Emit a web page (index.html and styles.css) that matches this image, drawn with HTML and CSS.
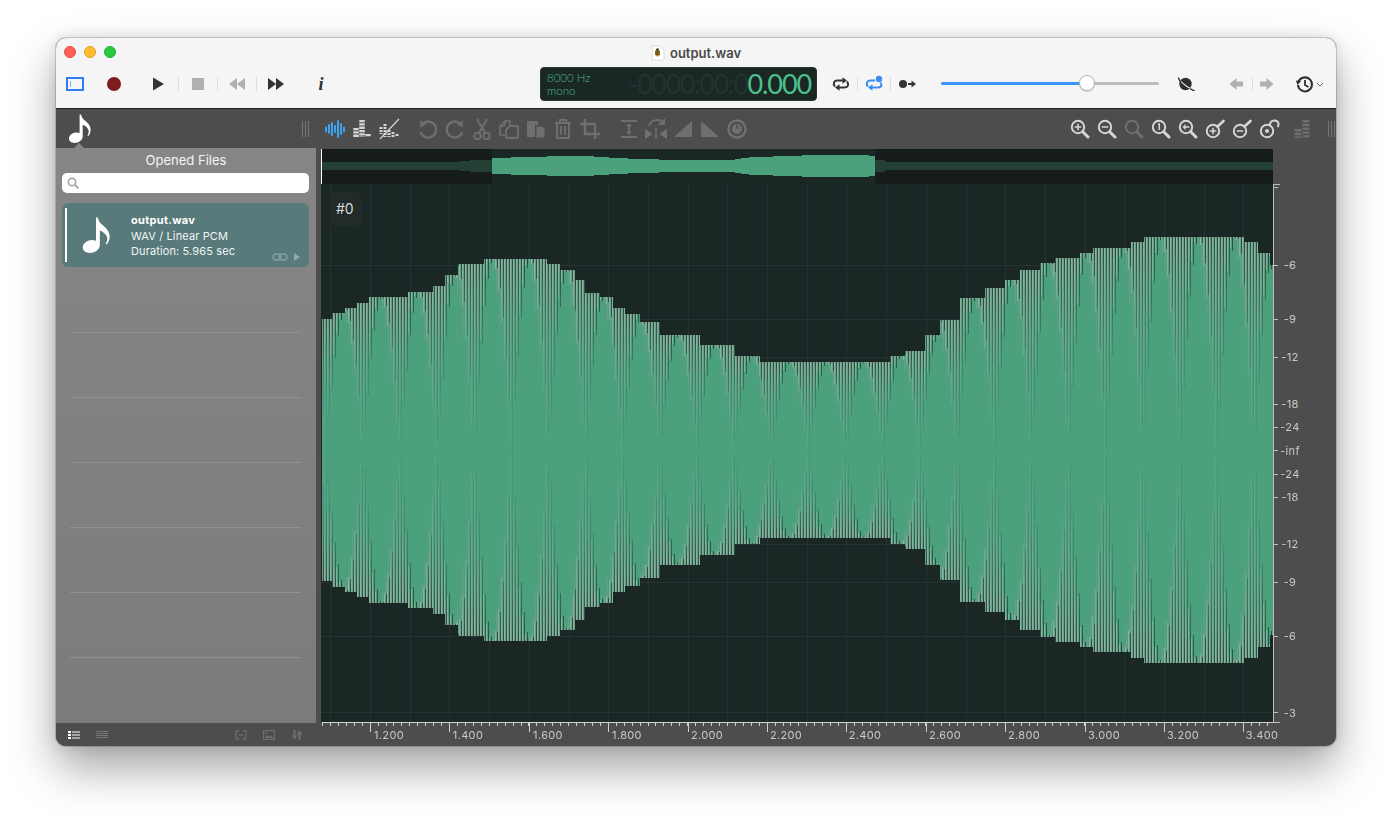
FILE: index.html
```html
<!DOCTYPE html>
<html lang="en">
<head>
<meta charset="utf-8">
<title>output.wav</title>
<link rel="stylesheet" href="styles.css">
</head>
<body>
<svg class="defs" width="0" height="0" aria-hidden="true">
  <symbol id="note" viewBox="0 0 24 29">
    <path fill="currentColor" d="M11.6 0.4h1.5c.5 3.2 2 4.6 4.500 6.700 3 2.600 5 5.200 5 8.700 0 2.400-.8 4.500-2.300 6.300l-.9-.4c.9-1.600 1.300-3.100 1.300-4.500 0-2.700-3.300-5.300-6-6.400v11.700c0 3.500-3.700 6.400-8 6.400-3.500 0-5.700-1.700-5.700-4.300 0-3.400 3.700-6 7.600-6 1 0 2 .2 3 .5z"/>
  </symbol>
</svg>

<div class="window">
  <header class="chrome">
    <div class="titlebar">
      <div class="lights"><i class="light red"></i><i class="light amber"></i><i class="light green"></i></div>
      <div class="title">
        <svg class="doc" viewBox="0 0 14 16"><path d="M1 1h8l4 4v10H1z" fill="#fff" stroke="#d6d6d6" stroke-width=".8"/><ellipse cx="6.500" cy="8" rx="2.600" ry="3.400" fill="#c58a2b"/><path d="M4.200 7h4.600M4.200 9h4.600" stroke="#2f2a22" stroke-width="1"/><circle cx="6.500" cy="4.600" r="1.300" fill="#333"/></svg>
        <span>output.wav</span>
      </div>
    </div>
    <div class="transport">
      <svg class="sidebtn" viewBox="0 0 18 14"><rect x="1" y="1" width="16" height="12" fill="none" stroke="#2f7cf6" stroke-width="2"/><path d="M4.500 4v6" stroke="#7fb0fa" stroke-width="1"/></svg>
      <svg class="ic ml20" viewBox="0 0 20 20"><circle cx="10" cy="10" r="7" fill="#7e1b1b"/></svg>
      <svg class="ic ml24" viewBox="0 0 20 20"><path d="M5 3.500l11 6.500-11 6.500z" fill="#333"/></svg>
      <i class="sep ml10"></i>
      <svg class="ic ml9" viewBox="0 0 20 20"><rect x="4" y="4" width="12" height="12" fill="#b0b0b0"/></svg>
      <i class="sep ml9"></i>
      <svg class="ic ml9" viewBox="0 0 20 20"><path d="M10 4v12L2 10zM18 4v12l-8-6z" fill="#b0b0b0"/></svg>
      <i class="sep ml9"></i>
      <svg class="ic ml9" viewBox="0 0 20 20"><path d="M2 4l8 6-8 6zM10 4l8 6-8 6z" fill="#333"/></svg>
      <span class="info">i</span>

      <div class="lcd">
        <div class="lcd-meta"><span>8000 Hz</span><span>mono</span></div>
        <div class="lcd-time"><span class="lcd-dim">-0000:00:0</span><span class="lcd-live">0.000</span></div>
      </div>

      <svg class="ic ml14" viewBox="0 0 20 20"><path d="M4 12.500C1.500 9.500 3 6.500 6.500 6.500H13M16 7.500c2.500 3 1 6-2.500 6H7" fill="none" stroke="#333" stroke-width="2"/><path d="M11.500 3.200L16 6.500l-4.500 3.300zM8.500 10.200L4 13.500l4.500 3.300z" fill="#333"/></svg>
      <i class="sep ml6"></i>
      <svg class="ic ml6" viewBox="0 0 20 20"><path d="M4 12.500C1.500 9.500 3 6.500 6.500 6.500H11M16.500 8.500c2 3 .5 5-3 5H7" fill="none" stroke="#3b8cf5" stroke-width="2"/><path d="M8.500 10.200L4 13.500l4.500 3.300z" fill="#3b8cf5"/><circle cx="15" cy="5" r="3.200" fill="#3b8cf5"/></svg>
      <i class="sep ml6"></i>
      <svg class="ic ml6" viewBox="0 0 20 20"><circle cx="6" cy="10" r="4" fill="#333"/><path d="M11 10h5" stroke="#333" stroke-width="2"/><path d="M14.500 6.500L19 10l-4.500 3.500z" fill="#333"/></svg>

      <div class="slider"><div class="slider-fill"></div><div class="slider-knob"></div></div>

      <svg class="ic ml17" viewBox="0 0 20 20"><circle cx="9.500" cy="10" r="6.200" fill="#2e2e2e"/><path d="M2.500 4.500c3 4 9 9 15 11.500" fill="none" stroke="#f5f5f5" stroke-width="1.200"/><path d="M3 3.500c-1 1 .6 3 2 4.500M14 14.500c2 1.500 4 2.500 4.500 1.500" fill="none" stroke="#2e2e2e" stroke-width="1.400"/></svg>
      <svg class="ic ml30" viewBox="0 0 20 20"><path d="M3.500 10l7-6v3.500H17v5h-6.500V16z" fill="#b0b0b0"/></svg>
      <i class="sep ml6"></i>
      <svg class="ic ml4" viewBox="0 0 20 20"><path d="M16.500 10l-7-6v3.500H3v5h6.500V16z" fill="#b0b0b0"/></svg>
      <svg class="ic ml18" viewBox="0 0 20 20"><path d="M3.600 7.500A7 7 0 1 1 3 11" fill="none" stroke="#2e2e2e" stroke-width="2"/><path d="M1 6.500l5 .8-3.600 3.600z" fill="#2e2e2e"/><path d="M10 6v5l3.500 2" fill="none" stroke="#2e2e2e" stroke-width="1.800"/></svg>
      <svg class="chev" viewBox="0 0 8 5"><path d="M1 1l3 3 3-3" fill="none" stroke="#666" stroke-width="1"/></svg>
    </div>
  </header>

  <nav class="tools">
    <svg class="note-tab"><use href="#note"/></svg>
    <svg class="grip ml210" viewBox="0 0 8 16"><path d="M.5 0v16M3.500 0v16M6.500 0v16" stroke="#777" stroke-width="1"/></svg>

    <div class="tool-group ml13">
      <svg class="t" viewBox="0 0 24 24"><path d="M3 10.500v4M6 8v8M9 6v12M12 9v6M15 4v16M18 7v10M21 10.500v4" stroke="#3ea3ee" stroke-width="2" stroke-linecap="round"/></svg>
      <svg class="t on" viewBox="0 0 24 24"><path d="M6 11v9M12 3v17M18 17v3" stroke="currentColor" stroke-width="5.500" stroke-dasharray="2.300 1"/></svg>
      <svg class="t on" viewBox="0 0 24 24"><path d="M4 10v7M8 7v13M12 13v7M16 15v5M20 17v3" stroke="currentColor" stroke-width="3" stroke-dasharray="2 1"/><path d="M3 22L22 2" stroke="currentColor" stroke-width="1.200"/></svg>
    </div>

    <div class="tool-group ml15">
      <svg class="t off" viewBox="0 0 24 24"><path d="M7 6.500A8 8 0 1 1 4.600 15" fill="none" stroke="currentColor" stroke-width="2.400"/><path d="M4 3.500l.4 7 6.200-3.200z" fill="currentColor"/></svg>
      <svg class="t off" viewBox="0 0 24 24"><path d="M17 6.500A8 8 0 1 0 19.400 15" fill="none" stroke="currentColor" stroke-width="2.400"/><path d="M20 3.500l-.4 7-6.200-3.200z" fill="currentColor"/></svg>
      <svg class="t off" viewBox="0 0 24 24"><path d="M7 2l8 14M17 2L9 16" stroke="currentColor" stroke-width="2"/><circle cx="7.500" cy="19" r="3.200" fill="none" stroke="currentColor" stroke-width="1.800"/><circle cx="16.500" cy="19" r="3.200" fill="none" stroke="currentColor" stroke-width="1.800"/></svg>
      <svg class="t off" viewBox="0 0 24 24"><path d="M3 9l5-5h5v5M3 9v9h5M3 9h4l2-5" fill="none" stroke="currentColor" stroke-width="1.700"/><path d="M9 13l4-4h7a1 1 0 0 1 1 1v10a1 1 0 0 1-1 1H10a1 1 0 0 1-1-1z" fill="none" stroke="currentColor" stroke-width="1.800"/></svg>
      <svg class="t off" viewBox="0 0 24 24"><path d="M3 4h11v4h-3v12H3z" fill="currentColor"/><path d="M12 9h6l3 3v9h-9z" fill="currentColor" stroke="#4d4d4d" stroke-width="1"/></svg>
      <svg class="t off" viewBox="0 0 24 24"><path d="M4 6h16M9 6V3h6v3M6 6v15h12V6M10 9v9M14 9v9" fill="none" stroke="currentColor" stroke-width="1.900"/></svg>
      <svg class="t off" viewBox="0 0 24 24"><path d="M7 2v15h15M2 7h15v15" fill="none" stroke="currentColor" stroke-width="2.400"/></svg>
    </div>

    <div class="tool-group ml15">
      <svg class="t off" viewBox="0 0 24 24"><path d="M4 4h16M4 20h16M12 7v10" stroke="currentColor" stroke-width="1.800"/><path d="M9 9.500L12 6l3 3.500zM9 14.500l3 3.500 3-3.500z" fill="currentColor"/></svg>
      <svg class="t off" viewBox="0 0 24 24"><path d="M1 12l8 5-8 5zM23 12l-8 5 8 5z" fill="currentColor"/><path d="M12 11v11" stroke="currentColor" stroke-width="1.600"/><path d="M5 9c1-5 8-8 14-4" fill="none" stroke="currentColor" stroke-width="2"/><path d="M21 1v7h-7z" fill="currentColor"/></svg>
      <svg class="t off" viewBox="0 0 24 24"><path d="M3 20L21 4v16z" fill="currentColor"/></svg>
      <svg class="t off" viewBox="0 0 24 24"><path d="M3 4l18 16H3z" fill="currentColor"/></svg>
      <svg class="t off" viewBox="0 0 24 24"><circle cx="12" cy="12" r="8.500" fill="none" stroke="currentColor" stroke-width="2.500"/><circle cx="12" cy="12" r="5" fill="currentColor"/><path d="M12 8v3.500" stroke="#4d4d4d" stroke-width="1.500"/></svg>
    </div>

    <div class="tool-group ml-auto">
      <svg class="t on" viewBox="0 0 24 24"><circle cx="10" cy="10" r="6.200" fill="none" stroke="currentColor" stroke-width="2"/><path d="M14.700 14.700l5.300 5.300" stroke="currentColor" stroke-width="3" stroke-linecap="round"/><path d="M6.700 10h6.600M10 6.700v6.600" stroke="currentColor" stroke-width="1.600"/></svg>
      <svg class="t on" viewBox="0 0 24 24"><circle cx="10" cy="10" r="6.200" fill="none" stroke="currentColor" stroke-width="2"/><path d="M14.700 14.700l5.300 5.300" stroke="currentColor" stroke-width="3" stroke-linecap="round"/><path d="M6.700 10h6.600" stroke="currentColor" stroke-width="1.600"/></svg>
      <svg class="t off" viewBox="0 0 24 24"><circle cx="10" cy="10" r="6.200" fill="none" stroke="currentColor" stroke-width="2"/><path d="M14.700 14.700l5.300 5.300" stroke="currentColor" stroke-width="3" stroke-linecap="round"/></svg>
      <svg class="t on" viewBox="0 0 24 24"><circle cx="10" cy="10" r="6.200" fill="none" stroke="currentColor" stroke-width="2"/><path d="M14.700 14.700l5.300 5.300" stroke="currentColor" stroke-width="3" stroke-linecap="round"/><path d="M9 7h1.300v6" fill="none" stroke="currentColor" stroke-width="1.500"/></svg>
      <svg class="t on" viewBox="0 0 24 24"><circle cx="10" cy="10" r="6.200" fill="none" stroke="currentColor" stroke-width="2"/><path d="M14.700 14.700l5.300 5.300" stroke="currentColor" stroke-width="3" stroke-linecap="round"/><path d="M8 10h5.500" stroke="currentColor" stroke-width="1.500"/><path d="M9.500 7L6.500 10l3 3z" fill="currentColor"/></svg>
      <svg class="t on" viewBox="0 0 24 24"><circle cx="10" cy="14" r="6.200" fill="none" stroke="currentColor" stroke-width="2"/><path d="M14.500 9.500L20.500 4" stroke="currentColor" stroke-width="2.600" stroke-linecap="round"/><path d="M6.700 14h6.600M10 10.700v6.600" stroke="currentColor" stroke-width="1.600"/></svg>
      <svg class="t on" viewBox="0 0 24 24"><circle cx="10" cy="14" r="6.200" fill="none" stroke="currentColor" stroke-width="2"/><path d="M14.500 9.500L20.500 4" stroke="currentColor" stroke-width="2.600" stroke-linecap="round"/><path d="M6.700 14h6.600" stroke="currentColor" stroke-width="1.600"/></svg>
      <svg class="t on" viewBox="0 0 24 24"><circle cx="10" cy="14" r="6.200" fill="none" stroke="currentColor" stroke-width="2"/><circle cx="10" cy="14" r="2" fill="currentColor"/><path d="M13 8c0-5.500 8-6 8.500-1.500.2 1.500-.3 2.700-1 3.500" fill="none" stroke="currentColor" stroke-width="2"/></svg>
    </div>
    <svg class="t off ml9" viewBox="0 0 24 24"><path d="M8 12v9M16 3v18" stroke="currentColor" stroke-width="7" stroke-dasharray="2.400 1.400"/></svg>
    <svg class="grip ml14" viewBox="0 0 8 16"><path d="M.5 0v16M3.500 0v16M6.500 0v16" stroke="#777" stroke-width="1"/></svg>
  </nav>

  <div class="workspace">
    <aside class="sidebar">
      <h1 class="side-title">Opened Files</h1>
      <div class="search">
        <svg class="search-ic" viewBox="0 0 12 12"><circle cx="5" cy="5" r="3.700" fill="none" stroke="#a8a8a8" stroke-width="1.700"/><path d="M8 8l3.300 3.300" stroke="#a8a8a8" stroke-width="2"/></svg>
      </div>
      <article class="file">
        <i class="file-mark"></i>
        <svg class="file-note"><use href="#note"/></svg>
        <div class="file-text">
          <strong>output.wav</strong>
          <span>WAV / Linear PCM</span>
          <span>Duration: 5.965 sec</span>
        </div>
        <div class="file-actions">
          <svg class="file-link" viewBox="0 0 16 10"><rect x="1" y="2" width="8" height="6" rx="3" fill="none" stroke="#7f9f9f" stroke-width="1.400"/><rect x="7" y="2" width="8" height="6" rx="3" fill="none" stroke="#7f9f9f" stroke-width="1.400"/></svg>
          <svg class="file-play" viewBox="0 0 8 10"><path d="M1 1l6 4-6 4z" fill="#8fabab"/></svg>
        </div>
      </article>
      <ul class="rows"><li></li><li></li><li></li><li></li><li></li><li></li></ul>
      <footer class="side-foot">
        <svg class="f" viewBox="0 0 12 8"><path d="M0 0h3v2H0zM0 3h3v2H0zM0 6h3v2H0zM4 .5h8v1H4zM4 3.500h8v1H4zM4 6.500h8v1H4z" fill="#fff"/></svg>
        <svg class="f ml16" viewBox="0 0 12 8"><path d="M0 .5h12M0 2.500h12M0 4.500h12M0 6.500h12" stroke="#757575" stroke-width="1"/></svg>
        <svg class="f2 ml-auto" viewBox="0 0 12 10"><path d="M4 1H2a1 1 0 0 0-1 1v6a1 1 0 0 0 1 1h2M8 1h2a1 1 0 0 1 1 1v6a1 1 0 0 1-1 1H8M4 5h4" fill="none" stroke="#6e6e6e" stroke-width="1.300"/></svg>
        <svg class="f2 ml16" viewBox="0 0 12 10"><rect x=".6" y=".6" width="10.800" height="8.800" fill="none" stroke="#6e6e6e" stroke-width="1.200"/><path d="M1.500 8l3-3 2 2 1.500-1.500L10.500 8z" fill="#6e6e6e"/><circle cx="3.500" cy="3.200" r="1" fill="#6e6e6e"/></svg>
        <svg class="f2 ml16" viewBox="0 0 12 10"><path d="M3.500 0v7M8.500 3v7" stroke="#6e6e6e" stroke-width="2"/><path d="M.5 5.500h6L3.500 9.500zM5.500 4.500h6L8.500.5z" fill="#6e6e6e"/></svg>
      </footer>
    </aside>

    <main class="editor">
      <div class="scope">
        <canvas id="wave" width="960" height="584"></canvas>
        <div class="channel">#0</div>
        <span class="db" style="top:116px">-6</span>
        <span class="db" style="top:170px">-9</span>
        <span class="db" style="top:208px">-12</span>
        <span class="db" style="top:255px">-18</span>
        <span class="db" style="top:278px">-24</span>
        <span class="db" style="top:302px">-inf</span>
        <span class="db" style="top:325px">-24</span>
        <span class="db" style="top:348px">-18</span>
        <span class="db" style="top:395px">-12</span>
        <span class="db" style="top:433px">-9</span>
        <span class="db" style="top:487px">-6</span>
        <span class="db" style="top:564px">-3</span>
        <span class="sec" style="left:68px">1.200</span>
        <span class="sec" style="left:147px">1.400</span>
        <span class="sec" style="left:227px">1.600</span>
        <span class="sec" style="left:306px">1.800</span>
        <span class="sec" style="left:386px">2.000</span>
        <span class="sec" style="left:465px">2.200</span>
        <span class="sec" style="left:544px">2.400</span>
        <span class="sec" style="left:624px">2.600</span>
        <span class="sec" style="left:703px">2.800</span>
        <span class="sec" style="left:783px">3.000</span>
        <span class="sec" style="left:862px">3.200</span>
        <span class="sec" style="left:941px">3.400</span>
      </div>
    </main>
  </div>
</div>
<script src="wave.js"></script>
</body>
</html>
```

FILE: styles.css
```css
* { box-sizing: border-box; }
html, body { margin: 0; height: 100%; }
body {
  background: #fff;
  padding: 38px 56px 0;
  overflow: hidden;
  font-family: Inter, "Liberation Sans", sans-serif;
}
.defs { position: absolute; }

.window {
  width: 1280px;
  height: 708px;
  border-radius: 10px;
  overflow: hidden;
  display: flex;
  flex-direction: column;
  background: #4d4d4d;
  box-shadow: 0 0 0 1px rgba(0, 0, 0, .16), 0 22px 46px rgba(0, 0, 0, .36), 0 0 14px rgba(0, 0, 0, .12);
}

/* title + transport */
.chrome {
  height: 71px;
  background: #f5f5f5;
  border-bottom: 1px solid #1f1f1f;
  flex: none;
}
.titlebar { position: relative; height: 28px; display: flex; align-items: center; justify-content: center; }
.lights { position: absolute; left: 8px; top: 8px; display: flex; gap: 8px; }
.light { width: 12px; height: 12px; border-radius: 50%; display: block; }
.red { background: #ff5f57; border: 1px solid #e5483f; }
.amber { background: #febc2e; border: 1px solid #dfa023; }
.green { background: #28c840; border: 1px solid #1eae32; }
.title { display: flex; align-items: center; gap: 5px; margin-top: 1px; font-size: 13px; font-weight: 600; color: #4a4a4a; }
.doc { width: 14px; height: 16px; }

.transport { height: 42px; display: flex; align-items: center; padding: 0 0 6px 10px; }
.sidebtn { width: 18px; height: 14px; flex: none; }
.ic { width: 20px; height: 20px; flex: none; }
.sep { display: block; width: 1px; height: 14px; background: #dcdcdc; flex: none; }
.info {
  width: 20px; margin-left: 25px; text-align: center; flex: none;
  font: italic bold 18px/20px "Liberation Serif", serif; color: #2e2e2e;
}
.ml4 { margin-left: 4px; } .ml6 { margin-left: 6px; } .ml9 { margin-left: 9px; }
.ml10 { margin-left: 10px; } .ml13 { margin-left: 13px; } .ml14 { margin-left: 14px; }
.ml15 { margin-left: 15px; } .ml16 { margin-left: 16px; } .ml17 { margin-left: 17px; }
.ml18 { margin-left: 18px; } .ml20 { margin-left: 20px; } .ml24 { margin-left: 24px; }
.ml30 { margin-left: 30px; } .ml210 { margin-left: 210px; } .ml-auto { margin-left: auto; }

.lcd {
  width: 277px; height: 34px; margin-left: 209px; flex: none;
  background: #1a2725; border-radius: 4px; border: 1px solid #2a3533;
  display: flex; align-items: center; justify-content: space-between;
  padding: 0 5px 0 6px;
}
.lcd-meta { display: flex; flex-direction: column; font-size: 11.500px; line-height: 13px; color: #4ab583; font-family: Lato, sans-serif; font-weight: 300; }
.lcd-time { display: flex; align-items: center; font-family: Lato, sans-serif; font-weight: 400; font-size: 27px; line-height: 32px; white-space: nowrap; }
.lcd-dim { color: #22332f; letter-spacing: -1.400px; }
.lcd-live { color: #4cc18c; letter-spacing: -1.100px; }

.slider { position: relative; width: 218px; height: 3px; margin: -1px 0 0 24px; background: #bcbcbc; border-radius: 2px; flex: none; }
.slider-fill { width: 146px; height: 3px; background: #3d95f9; border-radius: 2px; }
.slider-knob {
  position: absolute; left: 138px; top: -7px; width: 16px; height: 16px; border-radius: 50%;
  background: #fff; border: 1px solid #b5b5b5; box-shadow: 0 1px 1px rgba(0,0,0,.15);
}
.chev { width: 8px; height: 5px; margin-left: 1px; flex: none; }

/* dark tool bar */
.tools { position: relative; height: 39px; flex: none; display: flex; align-items: center; padding: 0 0 0 12px; background: #4d4d4d; color: #ddd; }
.tools::after {
  content: ""; position: absolute; left: 18px; bottom: 0;
  border: 5px solid transparent; border-top-width: 0; border-bottom-color: #858585;
}
.note-tab { width: 24px; height: 29px; color: #fff; flex: none; }
.grip { width: 8px; height: 16px; flex: none; }
.tool-group { display: flex; gap: 3px; flex: none; }
.t { width: 24px; height: 24px; flex: none; }
.on { color: #d6d6d6; }
.off { color: #6f6f6f; }

/* workspace */
.workspace { flex: 1; display: flex; min-height: 0; }
.sidebar { width: 260px; flex: none; display: flex; flex-direction: column; background: linear-gradient(#868686, #7b7b7b); }
.side-title { margin: 0; height: 25px; font-size: 13px; font-weight: 400; line-height: 25px; text-align: center; color: #f4f4f4; }
.search { height: 20px; margin: 0 7px 0 6px; background: #fff; border-radius: 5px; display: flex; align-items: center; padding-left: 5px; flex: none; }
.search-ic { width: 12px; height: 12px; }
.file {
  position: relative; height: 64px; margin: 10px 7px 0 6px; flex: none;
  background: #587a7a; border-radius: 6px; display: flex; align-items: center; color: #fff;
}
.file-mark { width: 2px; height: 54px; margin-left: 3px; background: #fff; flex: none; }
.file-note { width: 31px; height: 36px; margin-left: 14px; color: #fff; flex: none; }
.file-text { display: flex; flex-direction: column; margin: 3px 0 0 19px; font-size: 11px; line-height: 15.500px; letter-spacing: .12px; color: #f1f5f5; }
.file-text strong { font-weight: 700; color: #fff; letter-spacing: .3px; }
.file-actions { position: absolute; right: 8px; bottom: 5px; display: flex; align-items: center; gap: 5px; }
.file-link { width: 16px; height: 10px; }
.file-play { width: 8px; height: 10px; }
.rows { list-style: none; margin: 1px 15px 0 14px; padding: 0; flex: 1; }
.rows li { height: 65px; border-bottom: 1px solid #909090; }

.side-foot { height: 23px; flex: none; margin-top: auto; background: #4d4d4d; display: flex; align-items: center; padding: 0 13px 0 12px; }
.f { width: 12px; height: 8px; flex: none; }
.f2 { width: 12px; height: 10px; flex: none; }
.side-foot .ml16 { margin-left: 16px; }

/* editor */
.editor { flex: 1; min-width: 0; padding: 1px 0 0 5px; }
.scope { position: relative; width: 960px; height: 584px; }
#wave { display: block; }
.channel {
  position: absolute; left: 8px; top: 43px; width: 33px; height: 34px; border-radius: 8px;
  background: #212b2a; color: #d9d9d9; font-size: 14px; line-height: 34px; padding-left: 7px;
}
.db, .sec { position: absolute; font-size: 11px; line-height: 14px; letter-spacing: .35px; color: #c9c9c9; white-space: nowrap; }
.db { left: 969px; transform: translate(-50%, -50%); }
.sec { top: 579px; transform: translateX(-50%); }
```

FILE: wave.js
```js
(function () {
  var ctx = document.getElementById('wave').getContext('2d');
  var OX = 321, OY = 149;           // canvas origin in window pixels
  var CY = 450, P = 37.14, G0 = 473; // centre line, beat period, first beat node
  var RIGHT = 1273, BOTTOM = 722;

  // top edge of the stepped envelope: [start x, y]
  var steps = [[322,319],[332,313],[345,308],[357,303],[369,297],[408,292],[433,286],[445,275],
    [458,264],[484,259],[547,264],[560,270],[575,280],[585,293],[600,297],[613,308],[625,314],
    [640,322],[660,335],[700,345],[735,356],[760,362],[890,356],[905,351],[925,335],[940,320],
    [960,298],[985,288],[1005,280],[1020,270],[1040,263],[1055,258],[1080,253],[1093,248],
    [1131,242],[1144,237],[1244,242],[1258,253],[1270,265]];

  function env(x) {
    var y = steps[0][1];
    for (var i = 0; i < steps.length; i++) { if (x >= steps[i][0]) y = steps[i][1]; else break; }
    return CY - y;
  }
  function rect(c, x, y, w, h) { ctx.fillStyle = c; ctx.fillRect(x - OX, y - OY, w, h); }
  function mix(a, b, t) {
    return 'rgb(' + [0, 1, 2].map(function (i) { return Math.round(a[i] + (b[i] - a[i]) * t); }).join(',') + ')';
  }

  /* overview strip */
  rect('#151c1b', OX, 149, RIGHT - OX, 35);
  rect('#1a2725', 492, 149, 383, 35);
  for (var ox = 322; ox < RIGHT; ox++) {
    var inSel = ox >= 492 && ox < 875;
    var e;
    if (inSel) {
      e = Math.round(6 + (env(322 + (ox - 492) / 0.402) - 88) / 125 * 5);
    } else if (ox < 460 || ox >= 885) {
      e = 4;
    } else if (ox < 470) {
      e = 5;
    } else {
      e = 6;
    }
    rect(inSel ? '#4ba17c' : '#243f34', ox, 166 - e, 1, e * 2);
  }
  rect('#ffffff', OX, 149, 1, 35);

  /* main plot */
  rect('#1a2725', OX, 184, RIGHT - OX, BOTTOM - 184);
  var gy = [265, 319, 357, 404, 427, 450, 474, 497, 544, 582, 636, 712];
  gy.forEach(function (y) { rect('#243331', OX, y, RIGHT - OX, 1); });
  for (var t = 0; t < 25; t++) {
    var vx = Math.round(330.3 + t * 39.7);
    if (vx < RIGHT) rect('#243331', vx, 184, 1, BOTTOM - 184);
  }

  var SOLID = '#4ba17c';
  // stripe colour at the centre line and at the envelope, for the three sample phases
  var inner = [[84, 166, 134], [80, 158, 127], [72, 150, 118]];
  var outer = [[118, 190, 158], [125, 150, 140], [50, 72, 64]];
  var bias = [2, 2, 2.4];
  for (var x = 322; x < RIGHT; x++) {
    var E = env(x), k = x % 3;
    var d = k === 0 ? 0 : (k === 1 ? 0.2 : -0.2);
    var h = Math.round(E * Math.abs(Math.sin(Math.PI * (x + 0.5 - G0) / P + d)));
    for (var v = h; v < E; v++) {
      var c = mix(inner[k], outer[k], Math.pow(v / E, bias[k]));
      rect(c, x, CY - v - 1, 1, 1);
      rect(c, x, CY + v, 1, 1);
    }
    rect(SOLID, x, CY - h, 1, 2 * h);
  }

  /* axes */
  var axis = '#bdbdbd';
  rect(axis, RIGHT, 184, 1, BOTTOM - 184 + 1);
  rect(axis, RIGHT, 184, 7, 1);
  rect(axis, RIGHT, 187, 5, 1);
  gy.forEach(function (y) { rect(axis, RIGHT, y, 5, 1); });
  rect(axis, RIGHT, BOTTOM, 7, 1);

  rect('#d0d0d0', 322, BOTTOM, RIGHT - 322, 1);
  for (var n = 0; ; n++) {
    var tx = Math.round(322 + n * 7.94);
    if (tx > RIGHT) break;
    rect('#d0d0d0', tx, BOTTOM, 1, 4);
  }
  for (var m = 0; m < 12; m++) {
    rect('#d0d0d0', Math.round(370 + m * 79.4), BOTTOM, 1, 10);
  }
})();
```
